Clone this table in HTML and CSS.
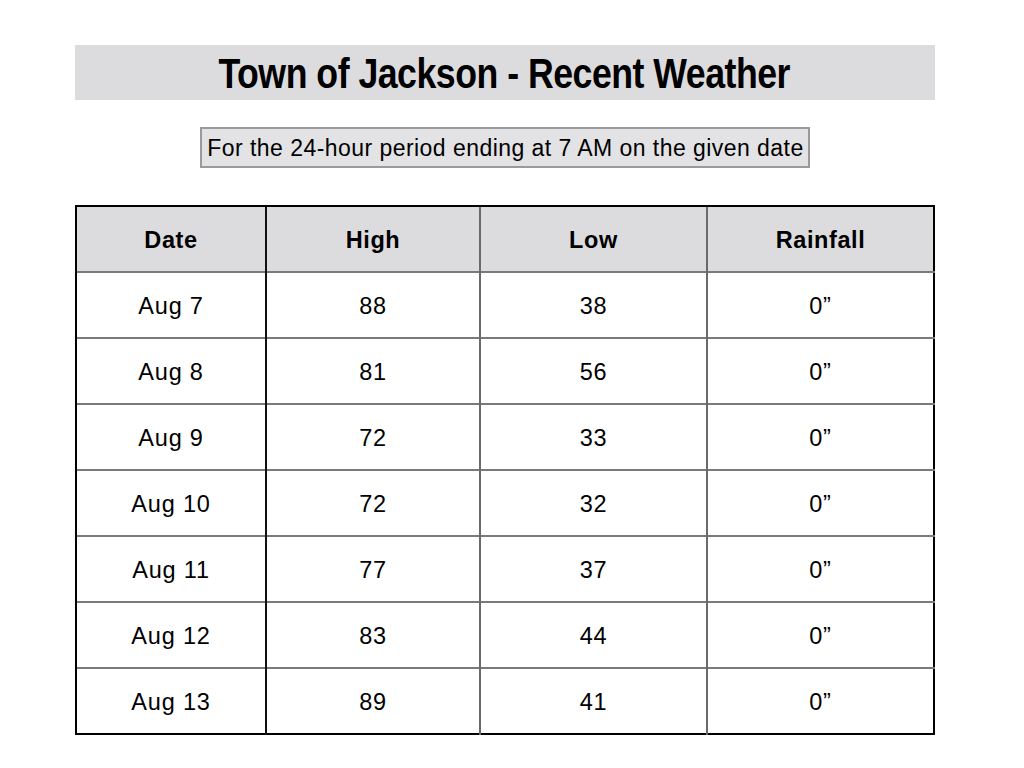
FILE: index.html
```html
<!DOCTYPE html>
<html>
<head>
<meta charset="utf-8">
<link rel="stylesheet" href="styles.css">
</head>
<body>
<div class="page">
  <h1 class="title"><span class="title-text">Town of Jackson - Recent Weather</span></h1>
  <div class="note-wrap"><div class="note">For the 24-hour period ending at 7 AM on the given date</div></div>
  <table class="weather">
    <colgroup>
      <col class="c1"><col class="c2"><col class="c3"><col class="c4">
    </colgroup>
    <thead>
      <tr><th class="first">Date</th><th>High</th><th>Low</th><th>Rainfall</th></tr>
    </thead>
    <tbody>
      <tr><td class="first">Aug 7</td><td>88</td><td>38</td><td>0”</td></tr>
      <tr><td class="first">Aug 8</td><td>81</td><td>56</td><td>0”</td></tr>
      <tr><td class="first">Aug 9</td><td>72</td><td>33</td><td>0”</td></tr>
      <tr><td class="first">Aug 10</td><td>72</td><td>32</td><td>0”</td></tr>
      <tr><td class="first">Aug 11</td><td>77</td><td>37</td><td>0”</td></tr>
      <tr><td class="first">Aug 12</td><td>83</td><td>44</td><td>0”</td></tr>
      <tr><td class="first">Aug 13</td><td>89</td><td>41</td><td>0”</td></tr>
    </tbody>
  </table>
</div>
</body>
</html>
```

FILE: styles.css
```css
html, body {
  margin: 0;
  padding: 0;
  background: #fff;
}
body {
  font-family: "Liberation Sans", Arial, sans-serif;
  color: #000;
}
.page {
  width: 860px;
  margin-left: 75px;
  padding-top: 45px;
}
.title {
  margin: 0;
  height: 55px;
  background: #dcdcde;
  display: flex;
  justify-content: center;
  align-items: center;
  font-family: "Liberation Sans", Arial, sans-serif;
  font-weight: bold;
  font-size: 42px;
  line-height: 55px;
  letter-spacing: -0.6px;
  padding-right: 2px;
  box-sizing: border-box;
}
.title-text {
  display: inline-block;
  transform: scaleX(0.85);
  white-space: nowrap;
  padding-top: 1px;
}
.note-wrap {
  display: flex;
  justify-content: center;
  margin-top: 27px;
}
.note {
  border: 2px solid #9a9a9c;
  background: #e3e3e5;
  font-size: 23px;
  letter-spacing: 0.45px;
  line-height: 37px;
  padding: 1px 4px 0 5px;
  height: 36px;
  white-space: nowrap;
}
.weather {
  margin-top: 37px;
  width: 858px;
  border-collapse: collapse;
  border: 2px solid #000;
  table-layout: fixed;
}
.c1 { width: 190px; }
.c2 { width: 214px; }
.c3 { width: 227px; }
.c4 { width: 227px; }
.weather th, .weather td {
  height: 62px;
  padding: 2px 0 0 0;
  text-align: center;
  font-size: 23.5px;
  letter-spacing: 0.8px;
  border-left: 2px solid #6a6a6a;
  border-top: 2px solid #7a7a7a;
}
.weather th {
  background: #dcdcde;
  font-weight: bold;
  border-top: 2px solid #000;
  letter-spacing: 0.6px;
}
.weather .first {
  border-left: 2px solid #000;
}
.weather td:nth-child(2), .weather th:nth-child(2) {
  border-left: 2px solid #111;
}
```
